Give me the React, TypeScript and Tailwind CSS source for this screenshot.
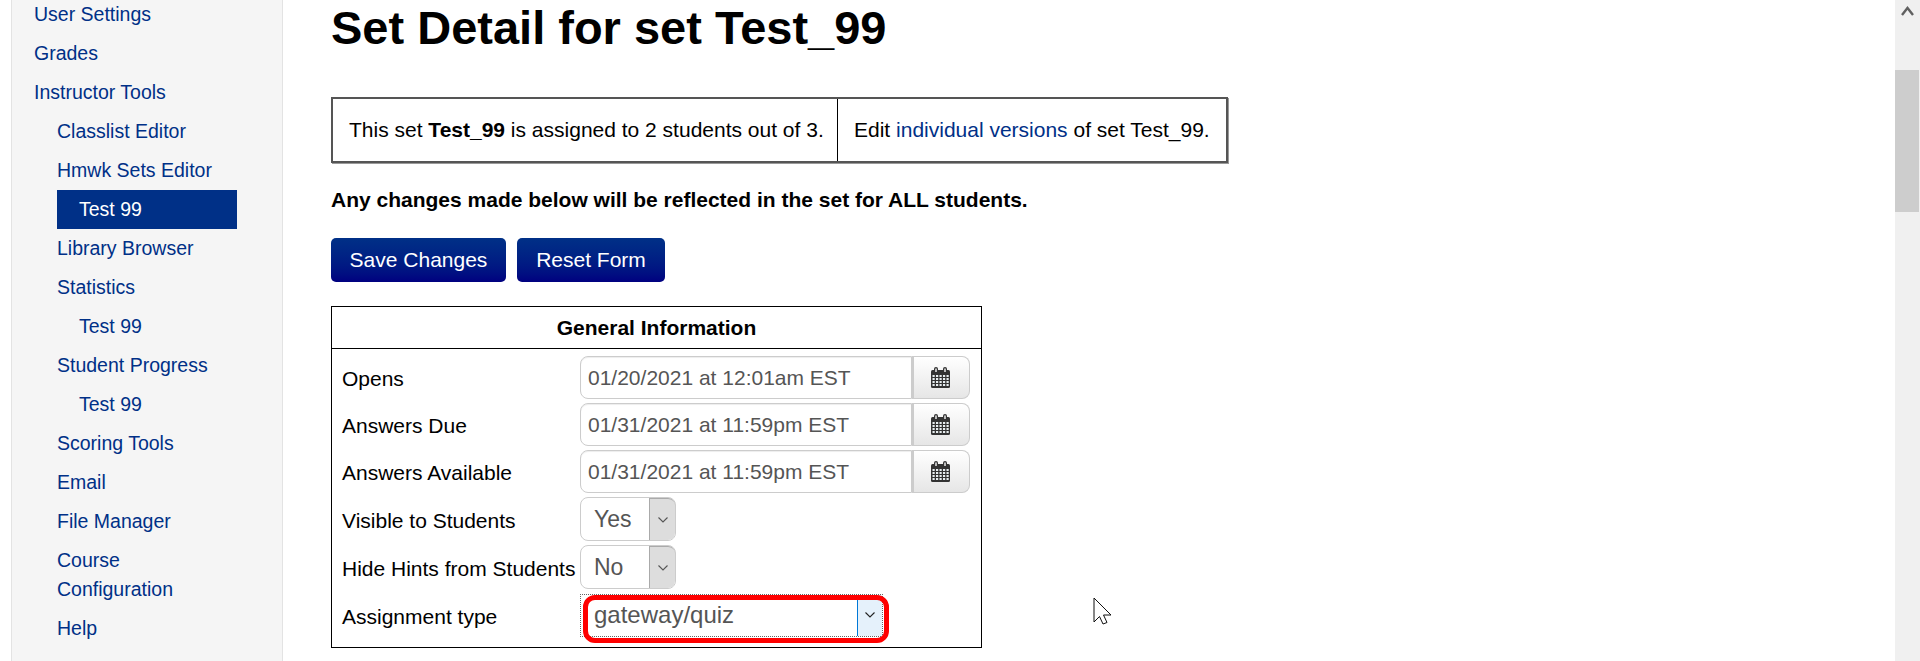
import React from 'react'

const font = "font-['Liberation_Sans',Arial,sans-serif]"

const navItems: { label: string; level: number; active?: boolean }[] = [
  { label: 'User Settings', level: 0 },
  { label: 'Grades', level: 0 },
  { label: 'Instructor Tools', level: 0 },
  { label: 'Classlist Editor', level: 1 },
  { label: 'Hmwk Sets Editor', level: 1 },
  { label: 'Test 99', level: 2, active: true },
  { label: 'Library Browser', level: 1 },
  { label: 'Statistics', level: 1 },
  { label: 'Test 99', level: 2 },
  { label: 'Student Progress', level: 1 },
  { label: 'Test 99', level: 2 },
  { label: 'Scoring Tools', level: 1 },
  { label: 'Email', level: 1 },
  { label: 'File Manager', level: 1 },
  { label: 'Course Configuration', level: 1 },
  { label: 'Help', level: 1 },
]

function CalendarIcon() {
  return (
    <svg width="19" height="21" viewBox="0 0 19 21">
      <rect x="0" y="3" width="19" height="18" rx="1.5" fill="#333" />
      <rect x="3" y="0" width="4" height="6" rx="2" fill="#333" />
      <rect x="12" y="0" width="4" height="6" rx="2" fill="#333" />
      <rect x="4.2" y="1.5" width="1.6" height="3.5" fill="#ddd" />
      <rect x="13.2" y="1.5" width="1.6" height="3.5" fill="#ddd" />
      {[8, 11, 14, 17].map((y) =>
        [1.5, 5, 8.5, 12, 15.5].map((x) => (
          <rect key={`${x}-${y}`} x={x} y={y} width="2.2" height="2" fill="#e8eef0" />
        )),
      )}
    </svg>
  )
}

function Chevron({ color = '#555' }: { color?: string }) {
  return (
    <svg width="10" height="6" viewBox="0 0 10 6" fill="none">
      <path d="M0.5 0.5 L5 5 L9.5 0.5" stroke={color} strokeWidth="1.1" />
    </svg>
  )
}

function DateRow({ label, value }: { label: string; value: string }) {
  return (
    <div className="flex h-[47px] items-center">
      <div className="w-[248px] pl-[10px] pt-[3px] text-[21px] text-black">{label}</div>
      <div className="flex h-[43px] w-[390px]">
        <div className="flex flex-1 items-center rounded-l-[8px] border border-[#ccc] pl-[7px] text-[21px] text-[#555] shadow-[inset_0_1px_1px_rgba(0,0,0,0.075)]">
          {value}
        </div>
        <div className="flex w-[58px] items-center justify-center rounded-r-[8px] border border-l-0 border-[#ccc] bg-linear-to-b from-white to-[#e6e6e6] shadow-[inset_2px_0_0_#ccc]">
          <CalendarIcon />
        </div>
      </div>
    </div>
  )
}

function SelectRow({ label, value }: { label: string; value: string }) {
  return (
    <div className="flex h-[48px] items-center">
      <div className="w-[248px] pl-[10px] pt-[3px] text-[21px] text-black whitespace-nowrap">{label}</div>
      <div className="flex h-[44px] w-[96px] rounded-[8px] border border-[#ccc]">
        <div className="flex flex-1 items-center pl-[13px] text-[23px] text-[#555]">{value}</div>
        <div className="flex w-[26px] items-center justify-center rounded-r-[7px] border-l border-t border-[#aaa] bg-[#ddd]">
          <Chevron />
        </div>
      </div>
    </div>
  )
}

export default function App() {
  return (
    <div className={`${font} relative flex h-[661px] w-[1920px] overflow-hidden bg-white`}>
      <aside className="ml-[11px] h-full w-[272px] shrink-0 border-x border-[#e3e3e3] bg-[#f5f5f5]">
        <ul className="-mt-[5px] pl-[22px] text-[19.5px] leading-[29px] text-[#003087]">
          {navItems.map((item, i) => (
            <li
              key={i}
              className={
                (item.level === 0
                  ? 'w-[200px] '
                  : item.level === 1
                    ? 'ml-[23px] w-[180px] pr-[20px] '
                    : 'ml-[23px] w-[180px] pl-[22px] ') +
                (item.active ? 'bg-[#003087] text-white ' : '') +
                'py-[5px]'
              }
            >
              {item.label}
            </li>
          ))}
        </ul>
      </aside>

      <main className="ml-[48px] flex-1">
        <h1 className="-mt-[2px] text-[47px] leading-[60px] font-bold text-black">Set Detail for set Test_99</h1>

        <div className="mt-[39px] flex h-[66px] w-[897px] items-center border-2 border-[#555] text-[21px] text-black shadow-[1px_1px_0_#999]">
          <div className="flex h-full w-[505px] items-center border-r border-black pl-[16px]">
            <span>
              This set <b>Test_99</b> is assigned to 2 students out of 3.
            </span>
          </div>
          <div className="pl-[16px]">
            Edit <span className="text-[#003087]">individual versions</span> of set Test_99.
          </div>
        </div>

        <p className="mt-[25px] text-[21px] leading-[24px] font-bold text-black">
          Any changes made below will be reflected in the set for ALL students.
        </p>

        <div className="mt-[26px] flex gap-[11px]">
          <button className="h-[44px] w-[175px] rounded-[5px] bg-linear-to-b from-[#003087] to-[#000080] text-[21px] text-white">
            Save Changes
          </button>
          <button className="h-[44px] w-[148px] rounded-[5px] bg-linear-to-b from-[#003087] to-[#000080] text-[21px] text-white">
            Reset Form
          </button>
        </div>

        <div className="relative mt-[24px] h-[342px] w-[651px] border border-black">
          <div className="flex h-[42px] items-center justify-center border-b border-black text-[21px] font-bold text-black">
            General Information
          </div>
          <div className="pt-[5px]">
            <DateRow label="Opens" value="01/20/2021 at 12:01am EST" />
            <DateRow label="Answers Due" value="01/31/2021 at 11:59pm EST" />
            <DateRow label="Answers Available" value="01/31/2021 at 11:59pm EST" />
            <SelectRow label="Visible to Students" value="Yes" />
            <SelectRow label="Hide Hints from Students" value="No" />
            <div className="flex h-[48px] items-center">
              <div className="w-[248px] pl-[10px] pt-[3px] text-[21px] text-black">Assignment type</div>
              <div className="flex h-[43px] w-[303px] border border-dotted border-[#666]">
                <div className="flex flex-1 items-center pl-[13px] text-[24px] text-[#555]">gateway/quiz</div>
                <div className="flex w-[25px] items-center justify-center border-l border-[#0078d7] bg-[#e5f1fb]">
                  <Chevron color="#222" />
                </div>
              </div>
            </div>
          </div>
          <div className="absolute left-[251px] top-[288px] h-[48px] w-[306px] rounded-[12px] border-[5px] border-[#ff0000]" />
        </div>
      </main>

      <div className="absolute right-0 top-0 flex h-full w-[25px] flex-col bg-[#f0f0f0]">
        <div className="flex h-[70px] justify-center pt-[6px]">
          <svg width="13" height="10" viewBox="0 0 13 10" fill="none">
            <path d="M1 9 L6.5 2 L12 9" stroke="#606060" strokeWidth="2.4" />
          </svg>
        </div>
        <div className="h-[142px] w-[24px] bg-[#cdcdcd]" />
      </div>

      <svg className="absolute left-[1093px] top-[597px]" width="19" height="28" viewBox="0 0 19 28">
        <path d="M1 1 L1 25 L6.5 19.5 L10 27 L14 25.5 L10.5 18 L18 18 Z" fill="#fff" stroke="#111" strokeWidth="1" />
      </svg>
    </div>
  )
}
